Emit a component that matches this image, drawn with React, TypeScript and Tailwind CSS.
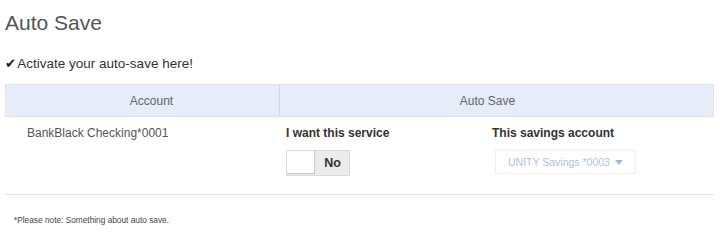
import React from "react";

export default function App() {
  return (
    <div className="w-[720px] h-[245px] bg-white overflow-hidden" style={{ fontFamily: '"Liberation Sans", Arial, sans-serif' }}>
      <div className="pt-[10px] pl-[5px] text-[21px] leading-[25px] text-[#555555]">Auto Save</div>
      <div className="mt-[20px] pl-[5px] text-[13.5px] leading-[16px] text-[#333333] flex items-baseline">
        <span className="text-[#222222] mr-[1px]" style={{ fontFamily: '"DejaVu Sans", sans-serif' }}>✔</span>
        <span>Activate your auto-save here!</span>
      </div>
      <div className="ml-[5px] w-[709px] mt-[12px]">
        <div className="flex h-[33px] border border-[#dfe3ea] bg-[#e6ecf8] text-[12px] text-[#666666]">
          <div className="w-[274px] flex items-center justify-center pl-[18px] border-r border-[#d3d9e3]">Account</div>
          <div className="flex-1 flex items-center justify-center pr-[18px]">Auto Save</div>
        </div>
        <div className="flex pt-[9px] h-[78px] border-b border-[#e3e3e3] text-[12px] leading-[14px]">
          <div className="w-[275px] pl-[22px] text-[#555555]">BankBlack Checking*0001</div>
          <div className="w-[206px] pl-[6px]">
            <div className="font-bold text-[#333333]">I want this service</div>
            <div className="mt-[10px] w-[64px] h-[26px] bg-[#ebebeb] border border-[#d9d9d9] flex">
              <div className="w-[28px] h-[23px] bg-white border-r border-b border-[#c9c9c9]"></div>
              <div className="flex-1 flex items-center justify-center font-bold text-[#333333] text-[12.5px] pl-[1px]">No</div>
            </div>
          </div>
          <div className="flex-1 pl-[6px]">
            <div className="font-bold text-[#333333]">This savings account</div>
            <div className="mt-[10px] ml-[3px] w-[141px] h-[24px] border border-[#eeeeee] bg-white flex items-center pl-[12px] text-[#a9c0ec] text-[10.5px] whitespace-nowrap">
              <span>UNITY Savings *0003</span>
              <svg className="ml-[5px]" width="8" height="5" viewBox="0 0 8 5"><path d="M0 0 L8 0 L4 5 Z" fill="#9db6e8" /></svg>
            </div>
          </div>
        </div>
      </div>
      <div className="mt-[20px] pl-[14px] text-[8.3px] leading-[10px] text-[#444444]">*Please note: Something about auto save.</div>
    </div>
  );
}
